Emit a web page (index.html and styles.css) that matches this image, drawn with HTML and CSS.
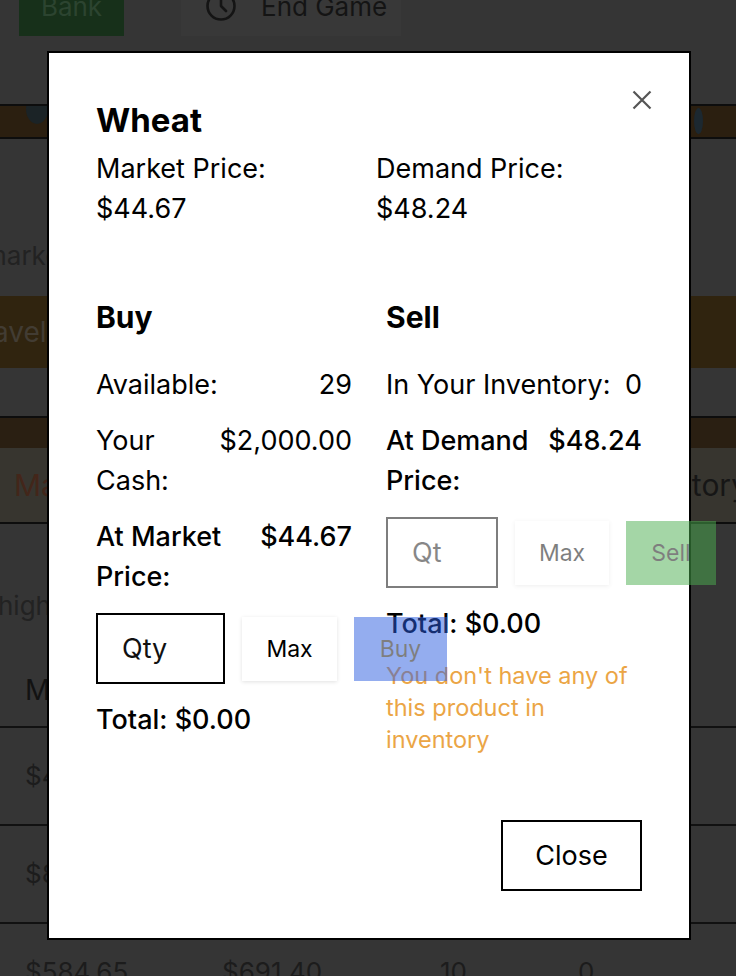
FILE: index.html
```html
<!DOCTYPE html>
<html lang="en">
<head>
<meta charset="utf-8">
<title>Wheat - Trade</title>
<link rel="stylesheet" href="styles.css">
</head>
<body>
<div class="page">
  <header class="topbar">
    <button class="bank-btn">Bank</button>
    <button class="end-btn">
      <svg class="clock" viewBox="0 0 32 32" aria-hidden="true"><circle cx="16" cy="16" r="13.5"/><path d="M16 7v9l5 5"/></svg>
      <span>End Game</span>
    </button>
  </header>
  <div class="band band-top"><span class="art art-l"></span><span class="art art-r"></span></div>
  <p class="intro">market day</p>
  <button class="travel-btn">Travel</button>
  <div class="band band-mid"></div>
  <nav class="tabs">
    <span class="tab tab-active">Market</span>
    <span class="tab">Inventory</span>
  </nav>
  <p class="hint">highlighted items are in demand</p>
  <table class="market-table">
    <thead>
      <tr><th>Market</th><th>Demand</th><th>Avail.</th><th>Owned</th></tr>
    </thead>
    <tbody>
      <tr><td>$44.67</td><td>$48.24</td><td>29</td><td>0</td></tr>
      <tr><td>$82.15</td><td>$95.30</td><td>14</td><td>0</td></tr>
      <tr><td>$584.65</td><td>$691.40</td><td>10</td><td>0</td></tr>
    </tbody>
  </table>
</div>

<div class="backdrop">
  <div class="modal" role="dialog" aria-labelledby="modal-title">
    <button class="modal-x" aria-label="Close">
      <svg viewBox="0 0 20 20" aria-hidden="true"><path d="M1.5 1.5L18.5 18.5M18.5 1.5L1.5 18.5"/></svg>
    </button>
    <h2 class="modal-title" id="modal-title">Wheat</h2>
    <div class="prices">
      <div class="price"><div>Market Price:</div><div>$44.67</div></div>
      <div class="price"><div>Demand Price:</div><div>$48.24</div></div>
    </div>
    <div class="trade">
      <section class="trade-col">
        <h3 class="trade-title">Buy</h3>
        <div class="row"><span class="row-label">Available:</span><span class="row-value">29</span></div>
        <div class="row"><span class="row-label">Your Cash:</span><span class="row-value">$2,000.00</span></div>
        <div class="row row-strong"><span class="row-label">At Market Price:</span><span class="row-value">$44.67</span></div>
        <div class="controls">
          <input class="qty qty-buy" type="text" placeholder="Qty">
          <button class="max-btn max-buy">Max</button>
          <button class="act-btn act-buy" disabled>Buy</button>
        </div>
        <div class="total">Total: $0.00</div>
      </section>
      <section class="trade-col">
        <h3 class="trade-title">Sell</h3>
        <div class="row"><span class="row-label">In Your Inventory:</span><span class="row-value">0</span></div>
        <div class="row row-strong"><span class="row-label">At Demand Price:</span><span class="row-value">$48.24</span></div>
        <div class="controls">
          <input class="qty qty-sell" type="text" placeholder="Qty" disabled>
          <button class="max-btn max-sell" disabled>Max</button>
          <button class="act-btn act-sell" disabled>Sell</button>
        </div>
        <div class="total">Total: $0.00</div>
        <div class="warn">You don't have any of this product in inventory</div>
      </section>
    </div>
    <div class="modal-footer">
      <button class="close-btn">Close</button>
    </div>
  </div>
</div>
</body>
</html>
```

FILE: styles.css
```css
* { box-sizing: border-box; }

html, body {
  margin: 0;
  padding: 0;
}

body {
  width: 736px;
  height: 976px;
  overflow: hidden;
  background: #353535;
  font-family: Inter, "Noto Sans", "Liberation Sans", sans-serif;
  color: #1e1e1e;
}

button, input {
  font-family: inherit;
}

/* ---------- dimmed page behind the dialog ---------- */
.page {
  display: flex;
  flex-direction: column;
}

.topbar {
  height: 36px;
  display: flex;
  align-items: flex-end;
  gap: 57px;
  padding-left: 19px;
}

.bank-btn {
  width: 105px;
  height: 60px;
  border: 0;
  background: #17301a;
  color: #2c4430;
  font-size: 26px;
  padding: 0;
}

.end-btn {
  width: 220px;
  height: 60px;
  border: 0;
  background: #383838;
  color: #141414;
  font-size: 26px;
  display: flex;
  align-items: center;
  gap: 24px;
  padding: 0 0 0 24px;
}

.clock {
  width: 32px;
  height: 32px;
  fill: none;
  stroke: #141414;
  stroke-width: 2.6;
  stroke-linecap: round;
  stroke-linejoin: round;
}

.band {
  position: relative;
  overflow: hidden;
}

.band-top {
  margin-top: 68px;
  height: 35px;
  border-top: 2px solid #0d0d0d;
  border-bottom: 2px solid #0d0d0d;
  background: #2b1f10;
}

.art {
  position: absolute;
  border-radius: 50%;
  background: #1b2326;
}

.art-l {
  left: 26px;
  top: -12px;
  width: 22px;
  height: 30px;
}

.art-r {
  left: 694px;
  top: 2px;
  width: 9px;
  height: 26px;
  background: #1c2830;
}

.intro {
  margin: 0 0 20px -16px;
  padding-top: 97px;
  font-size: 26px;
  line-height: 40px;
  white-space: nowrap;
  color: #222;
}

.travel-btn {
  height: 72px;
  border: 0;
  background: #30240f;
  color: #423c33;
  font-size: 28px;
  text-align: left;
  padding: 0;
  text-indent: -34px;
  margin-bottom: 48px;
}

.band-mid {
  height: 32px;
  border-top: 2px solid #0d0d0d;
  background: #2a1f12;
}

.tabs {
  height: 76px;
  border-bottom: 2px solid #0d0d0d;
  background: #37352f;
  display: flex;
  justify-content: space-between;
  align-items: center;
  padding: 0 0 0 14px;
  margin-right: -12px;
  font-size: 30px;
  color: #161616;
}

.tab-active {
  color: #43261a;
}

.hint {
  margin: 62px 0 0 -2px;
  font-size: 26px;
  line-height: 40px;
  white-space: nowrap;
  color: #222;
}

.market-table {
  border-collapse: collapse;
  table-layout: fixed;
  width: 736px;
  font-size: 26px;
  line-height: 40px;
  color: #1c1c1c;
}

.market-table th:nth-child(1), .market-table td:nth-child(1) { width: 197px; }
.market-table th:nth-child(2), .market-table td:nth-child(2) { width: 218px; }
.market-table th:nth-child(3), .market-table td:nth-child(3) { width: 138px; }

.market-table th {
  text-align: left;
  font-weight: 400;
  font-size: 28px;
  padding: 44px 0 16px 25px;
  border-bottom: 2px solid #111;
  color: #121212;
}

.market-table td {
  height: 98px;
  padding: 0 0 0 25px;
  border-bottom: 2px solid #111;
}

/* ---------- dialog ---------- */
.backdrop {
  position: fixed;
  inset: 0;
}

.modal {
  position: absolute;
  left: 47px;
  top: 51px;
  width: 644px;
  background: #fff;
  border: 2px solid #000;
  padding: 47px;
  color: #000;
}

.modal-x {
  position: absolute;
  top: 37px;
  right: 37px;
  width: 20px;
  height: 20px;
  padding: 0;
  border: 0;
  background: none;
}

.modal-x svg {
  display: block;
  width: 20px;
  height: 20px;
  fill: none;
  stroke: #555;
  stroke-width: 2.2;
}

.modal-title {
  margin: 0;
  font-size: 33px;
  line-height: 40px;
  font-weight: 700;
}

.prices {
  margin-top: 9px;
  display: grid;
  grid-template-columns: 1fr 1fr;
  column-gap: 14px;
  font-size: 27px;
  line-height: 40px;
}

.trade {
  margin-top: 70px;
  display: grid;
  grid-template-columns: 256px 256px;
  column-gap: 34px;
  align-items: start;
}

.trade-col {
  display: flex;
  flex-direction: column;
  gap: 16px;
  font-size: 27px;
  line-height: 40px;
}

.trade-title {
  margin: 0 0 14px;
  font-size: 30px;
  line-height: 36px;
  font-weight: 700;
}

.row {
  display: flex;
  justify-content: space-between;
  gap: 12px;
}

.row-value {
  flex-shrink: 0;
  text-align: right;
}

.row-strong {
  font-weight: 500;
}

.controls {
  display: flex;
  align-items: center;
  gap: 17px;
}

.qty {
  flex-shrink: 0;
  height: 71px;
  border: 2px solid #000;
  border-radius: 0;
  background: #fff;
  padding: 0 53px 0 24px;
  font-size: 27px;
  color: #000;
  outline: none;
}

.qty::placeholder {
  color: #111;
  opacity: 1;
}

.qty-buy { width: 129px; }
.qty-sell { width: 112px; padding-right: 54px; }

.qty:disabled {
  opacity: 0.5;
}

.max-btn {
  flex-shrink: 0;
  height: 64px;
  border: 0;
  background: #fff;
  box-shadow: 0 1px 4px rgba(0, 0, 0, 0.12);
  font-size: 23px;
  color: #000;
  padding: 0;
}

.max-buy { width: 95px; }
.max-sell { width: 94px; }

.max-btn:disabled {
  opacity: 0.5;
}

.act-btn {
  flex-shrink: 0;
  height: 64px;
  border: 0;
  font-size: 23px;
  color: #000;
  padding: 0;
  opacity: 0.5;
}

.act-buy {
  width: 93px;
  background: #2b5de1;
}

.act-sell {
  width: 90px;
  background: #4caf50;
}

.total {
  font-weight: 500;
}

.warn {
  font-size: 23.5px;
  line-height: 32px;
  color: #eba545;
}

.modal-footer {
  margin-top: 64px;
  display: flex;
  justify-content: flex-end;
}

.close-btn {
  width: 141px;
  height: 71px;
  border: 2px solid #000;
  background: #fff;
  font-size: 27px;
  color: #000;
  padding: 0;
}
```
